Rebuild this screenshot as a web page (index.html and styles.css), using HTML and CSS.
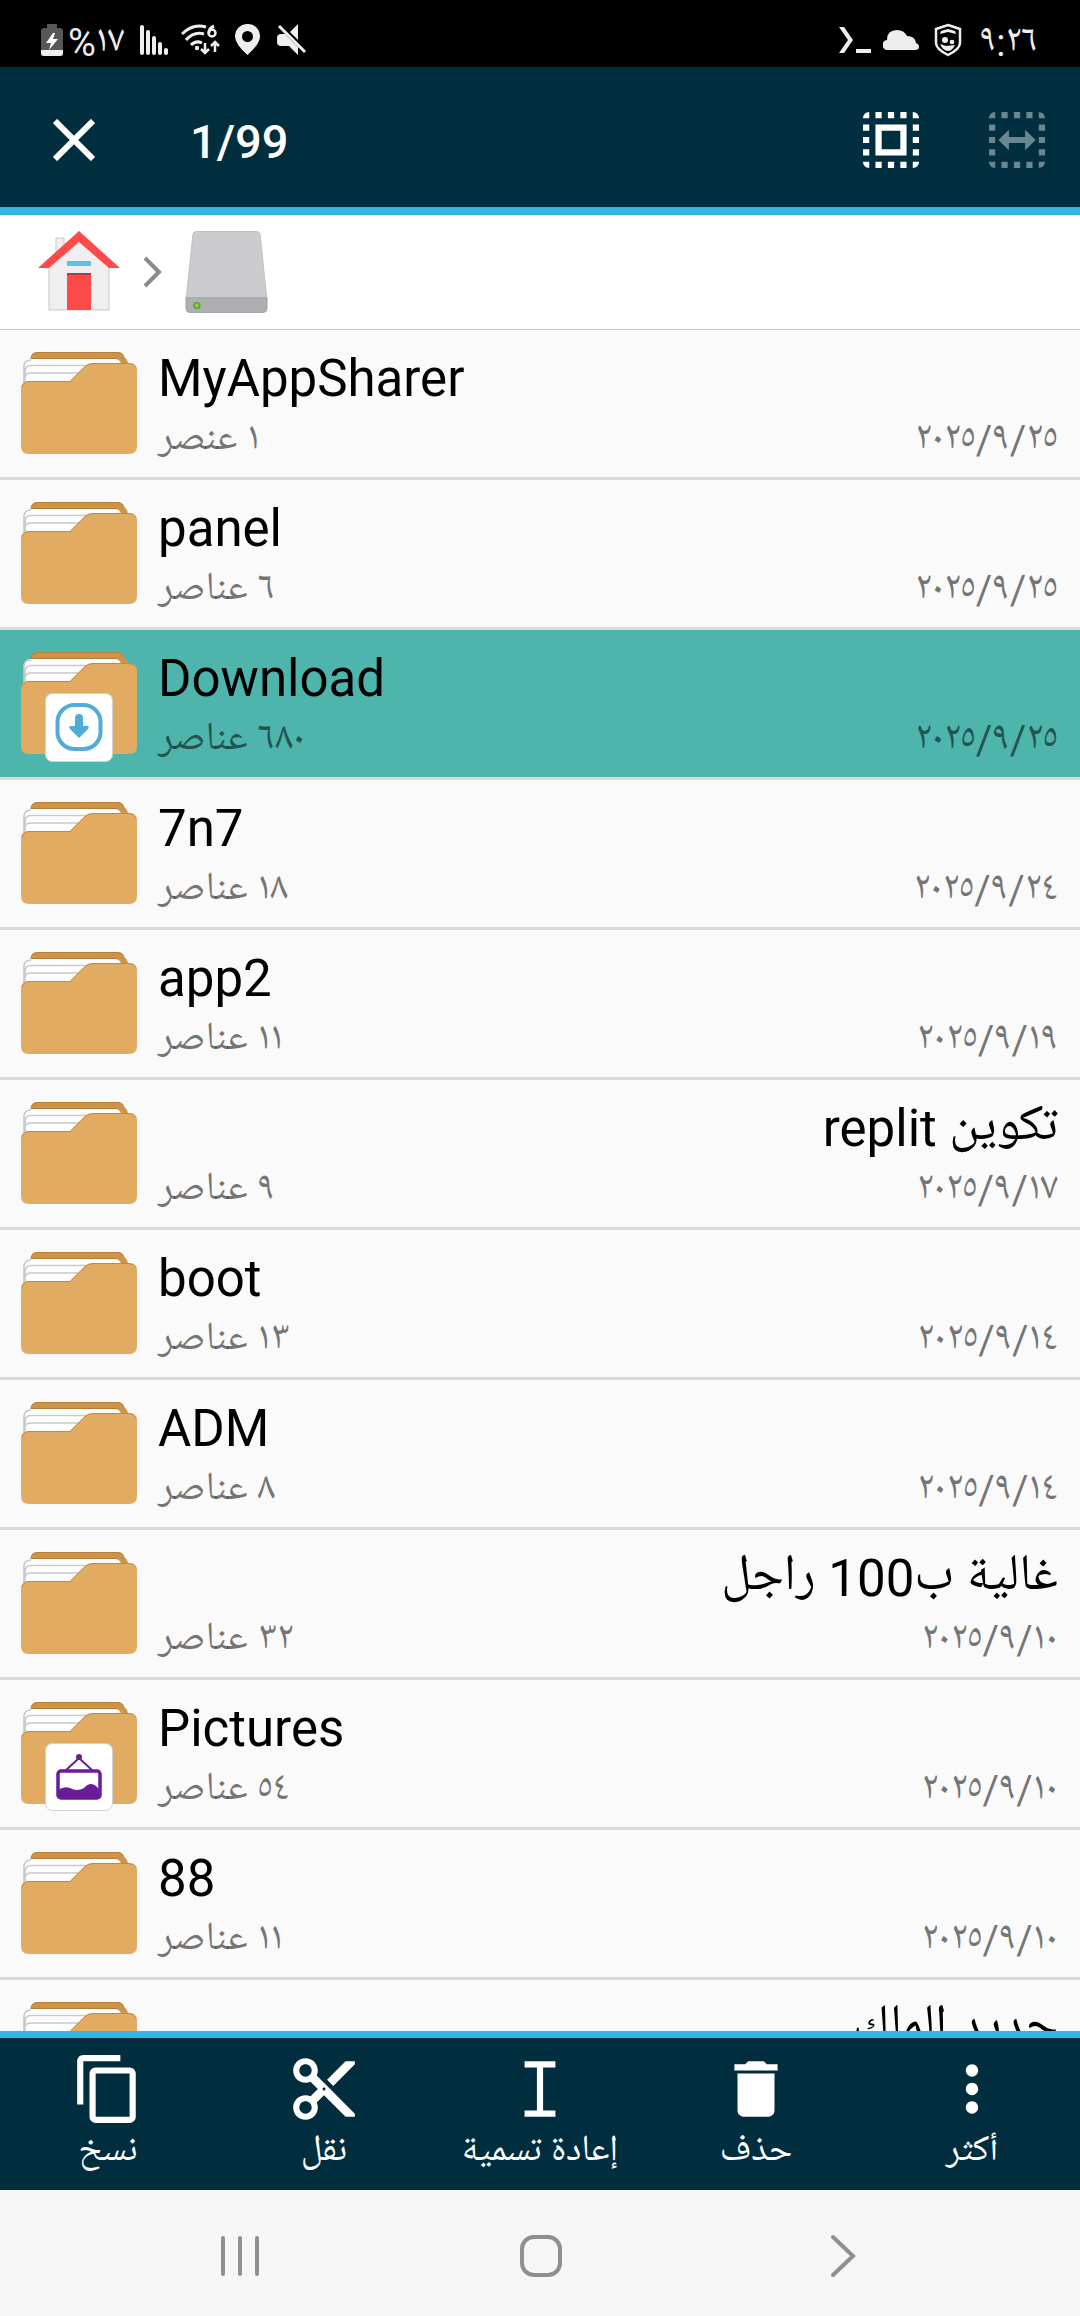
FILE: index.html
```html
<!DOCTYPE html>
<html lang="ar">
<head>
<meta charset="utf-8">
<meta name="viewport" content="width=device-width, initial-scale=1">
<title>1/99</title>
<link rel="stylesheet" href="styles.css">
</head>
<body>
<svg class="symbols" aria-hidden="true">
  <symbol id="folder" viewBox="21 22 116 110">
    <path d="M31 40V29q0-7 7-7h79q7 0 7 7v20H31z" fill="#cf9345"/>
    <path d="M31 29q0-6.500 7-6.500h79q7 0 7 6.500" transform="translate(0 0)" fill="none" stroke="#b5803c"/>
    <path d="M122 26q6 2 6 9H116z" fill="#cf9345"/>
    <path d="M31 28h86v3H31z" fill="#b27c38"/>
    <path d="M24 60V36q0-7 7-7h84q6 0 7 8v12L60 60z" fill="#fff"/>
    <path d="M24 54V37q0-7 7-7M25 54V42q0-6.500 6-6.500h56M25 56v-8q0-5 6-5h48" fill="none" stroke="#c9c9cb" stroke-width="1.600"/>
    <path d="M21 59q0-8 8-8h41l14-14q4-4 9-4h36q8 0 8 8v75q0 8-8 8H29q-8 0-8-8z" fill="#e1ac62"/>
    <path d="M22 57q2-5.500 7-5.500h41l14-14q4-4 9-4h36q5 0 7 4" fill="none" stroke="#c08a45"/>
  </symbol>
  <symbol id="dots-frame" viewBox="3 3 18 18">
    <path d="M3 5h2V3c-1.100 0-2 .9-2 2zm0 8h2v-2H3v2zm4 8h2v-2H7v2zM3 9h2V7H3v2zm10-6h-2v2h2V3zm6 0v2h2c0-1.100-.9-2-2-2zM5 21v-2H3c0 1.100.9 2 2 2zm-2-4h2v-2H3v2zM9 3H7v2h2V3zm2 18h2v-2h-2v2zm8-8h2v-2h-2v2zm0 8c1.100 0 2-.9 2-2h-2v2zm0-12h2V7h-2v2zm0 8h2v-2h-2v2zm-4 4h2v-2h-2v2zm0-16h2V3h-2v2z"/>
  </symbol>
</svg>

<div class="status">
  <div class="status-group">
    <svg width="22" height="34" viewBox="0 0 22 34"><path d="M6 1h10v4h3q3 0 3 3v22q0 3-3 3H3q-3 0-3-3V8q0-3 3-3h3z" fill="#575757"/><path d="M0 27h22v3q0 3-3 3H3q-3 0-3-3z" fill="#eee"/><path d="M12 10 5 20h5l-2 7 9-11h-5l2-6z" fill="#fff"/></svg>
    <span class="status-text battery-text">%١٧</span>
    <svg class="gap-signal" width="28" height="30" viewBox="0 0 28 30" stroke="#eee" stroke-width="4" stroke-linecap="round"><path d="M2 2v26M8 7v21M14 13v15M20 19v9M26 25v3"/></svg>
    <svg class="gap-wifi" width="40" height="32" viewBox="0 0 40 32" fill="none" stroke="#eee" stroke-width="3"><path d="M1 10Q12-1 25 3M5 16q8-9 18-6M10 21q5-5 11-2"/><circle cx="16" cy="24" r="2.200" fill="#eee" stroke="none"/><path d="M33 2q-5 2-5 7"/><circle cx="31" cy="9" r="3.500" stroke-width="2.500"/><path d="M24 19v10m-4-4 4 4 4-4M34 28V18m-4 4 4-4 4 4" stroke-width="2.500"/></svg>
    <svg class="gap-pin" width="25" height="31" viewBox="0 0 25 31"><path d="M12.500 0A12 12 0 0 0 0 12.500Q0 20 12.500 31 25 20 25 12.500A12 12 0 0 0 12.500 0zm0 7a5.500 5.500 0 1 1 0 11 5.500 5.500 0 0 1 0-11z" fill="#eee"/></svg>
    <svg class="gap-mute" width="30" height="31" viewBox="0 0 30 31"><path d="M4 10h4l13 13v8l-9-9H4q-4 0-4-4v-4q0-4 4-4zM13 8l8-8v16z" fill="#eee"/><path d="m2 2 26 26" stroke="#eee" stroke-width="3"/></svg>
  </div>
  <div class="status-group">
    <svg width="34" height="28" viewBox="0 0 34 28"><path d="M1 1h5l9 13-9 13H1l9-13z" fill="#eee"/><path d="M18 23h15v4H18z" fill="#eee"/></svg>
    <svg class="gap-small cloud" width="36" height="20" viewBox="0 0 36 20"><path d="M5 20a5 5 0 0 1-1-10Q4 0 14 0q7 0 10 6 8 0 9 7 3 1 3 4t-4 3z" fill="#eee"/></svg>
    <svg class="gap-shield" width="28" height="34" viewBox="0 0 28 34"><path d="m14 2 12 4v14q0 6-12 12Q2 26 2 20V6z" fill="none" stroke="#eee" stroke-width="2.500"/><path d="m6 11 1-3 7-2 7 2 1 3-8-2z" fill="#eee"/><circle cx="11" cy="17" r="3" fill="#eee"/><circle cx="18" cy="19" r="2.300" fill="#eee"/><path d="m6 21 6 2 9-1q-3 6-7 6-5 0-8-7z" fill="#eee"/></svg>
    <span class="status-text clock">٩:٢٦</span>
  </div>
</div>

<header class="toolbar">
  <button class="icon-button" aria-label="إغلاق"><svg width="42" height="42" viewBox="0 0 42 42"><path d="m2 2 38 38M40 2 2 40" stroke="#fff" stroke-width="6"/></svg></button>
  <h1 class="selection-count">1/99</h1>
  <div class="toolbar-actions">
    <button class="icon-button" aria-label="تحديد الكل"><svg width="56" height="56" viewBox="3 3 18 18" fill="#fff"><use href="#dots-frame" x="3" y="3" width="18" height="18"/><path d="M7 17h10V7H7v10zm2-8h6v6H9V9z"/></svg></button>
    <button class="icon-button" aria-label="تحديد نطاق" disabled><svg width="56" height="56" viewBox="3 3 18 18" fill="#698790"><use href="#dots-frame" x="3" y="3" width="18" height="18"/><path d="M6 12l3.400-3.300V11h5.200V8.700L18 12l-3.400 3.300V13H9.400v2.300z"/></svg></button>
  </div>
</header>

<nav class="crumbs" aria-label="المسار">
  <a href="#" aria-label="الرئيسية"><svg width="82" height="82" viewBox="0 0 82 82"><path d="M18 7h8v24h-8z" fill="#efefef" stroke="#c5caca"/><path d="M11 36 41 10l30 26v43H11z" fill="#efefef" stroke="#c5caca"/><path d="M41 0 82 37H71L41 11 11 37H0z" fill="#ff4a4a"/><path d="M29 30h24v5H29z" fill="#5fbfe6"/><path d="M29 43h24v36H29z" fill="#ff4a4a"/><path d="M29 42h24v2H29z" fill="#b83a3a"/></svg></a>
  <svg width="19" height="32" viewBox="0 0 19 32"><path d="m2 2 14 14L2 30" fill="none" stroke="#8a8a8a" stroke-width="4"/></svg>
  <a href="#" aria-label="التخزين"><svg width="83" height="84" viewBox="0 0 84 84"><path d="M8 4q0-3 4-3h60q4 0 4 3l7 67H1z" fill="#cccccf" stroke="#bfbfc1"/><path d="M1 68h82v11q0 4-4 4H5q-4 0-4-4z" fill="#aeafb2" stroke="#a3a4a6"/><circle cx="12" cy="76" r="3" fill="#93c83d" stroke="#5c9a3a" stroke-width="1.500"/></svg></a>
</nav>

<main class="files">
  <ul class="file-list">
    <li><a class="file" href="#"><svg class="folder"><use href="#folder"/></svg><span class="info"><span class="name" dir="auto">MyAppSharer</span><span class="meta"><span dir="rtl">١ عنصر</span><span>٢٠٢٥/٩/٢٥</span></span></span></a></li>
    <li><a class="file" href="#"><svg class="folder"><use href="#folder"/></svg><span class="info"><span class="name" dir="auto">panel</span><span class="meta"><span dir="rtl">٦ عناصر</span><span>٢٠٢٥/٩/٢٥</span></span></span></a></li>
    <li><a class="file selected" href="#" aria-current="true"><svg class="folder" viewBox="21 22 116 110"><use href="#folder" x="21" y="22" width="116" height="110"/><rect x="45.500" y="63.500" width="67" height="68" rx="7" fill="#fff" stroke="#d0d3d3"/><rect x="57.500" y="75" width="43" height="44" rx="17" fill="none" stroke="#53acd5" stroke-width="4"/><path d="M75 88q0-4 4-4t4 4v8h4q3 0 1 3l-9 9-9-9q-2-3 1-3h4z" fill="#4badd8"/></svg><span class="info"><span class="name" dir="auto">Download</span><span class="meta"><span dir="rtl">٦٨٠ عناصر</span><span>٢٠٢٥/٩/٢٥</span></span></span></a></li>
    <li><a class="file" href="#"><svg class="folder"><use href="#folder"/></svg><span class="info"><span class="name" dir="auto">7n7</span><span class="meta"><span dir="rtl">١٨ عناصر</span><span>٢٠٢٥/٩/٢٤</span></span></span></a></li>
    <li><a class="file" href="#"><svg class="folder"><use href="#folder"/></svg><span class="info"><span class="name" dir="auto">app2</span><span class="meta"><span dir="rtl">١١ عناصر</span><span>٢٠٢٥/٩/١٩</span></span></span></a></li>
    <li><a class="file" href="#"><svg class="folder"><use href="#folder"/></svg><span class="info"><span class="name" dir="auto">تكوين replit</span><span class="meta"><span dir="rtl">٩ عناصر</span><span>٢٠٢٥/٩/١٧</span></span></span></a></li>
    <li><a class="file" href="#"><svg class="folder"><use href="#folder"/></svg><span class="info"><span class="name" dir="auto">boot</span><span class="meta"><span dir="rtl">١٣ عناصر</span><span>٢٠٢٥/٩/١٤</span></span></span></a></li>
    <li><a class="file" href="#"><svg class="folder"><use href="#folder"/></svg><span class="info"><span class="name" dir="auto">ADM</span><span class="meta"><span dir="rtl">٨ عناصر</span><span>٢٠٢٥/٩/١٤</span></span></span></a></li>
    <li><a class="file" href="#"><svg class="folder"><use href="#folder"/></svg><span class="info"><span class="name" dir="auto">غالية ب100 راجل</span><span class="meta"><span dir="rtl">٣٢ عناصر</span><span>٢٠٢٥/٩/١٠</span></span></span></a></li>
    <li><a class="file" href="#"><svg class="folder" viewBox="21 22 116 110"><use href="#folder" x="21" y="22" width="116" height="110"/><rect x="45.500" y="63.500" width="67" height="67" rx="7" fill="#fff" stroke="#d0d3d3"/><path d="m65 91 14-13 14 13" fill="none" stroke="#6a1b9a" stroke-width="2"/><circle cx="79" cy="77" r="3" fill="#6a1b9a"/><rect x="58" y="91" width="42" height="27" rx="3" fill="none" stroke="#6a1b9a" stroke-width="3.500"/><path d="M58 110q6-4 12-2 7 4 14 0 6-7 12-2l4 4v8H58z" fill="#6a1b9a"/></svg><span class="info"><span class="name" dir="auto">Pictures</span><span class="meta"><span dir="rtl">٥٤ عناصر</span><span>٢٠٢٥/٩/١٠</span></span></span></a></li>
    <li><a class="file" href="#"><svg class="folder"><use href="#folder"/></svg><span class="info"><span class="name" dir="auto">88</span><span class="meta"><span dir="rtl">١١ عناصر</span><span>٢٠٢٥/٩/١٠</span></span></span></a></li>
    <li><a class="file" href="#"><svg class="folder"><use href="#folder"/></svg><span class="info"><span class="name" dir="auto">جديد الملك</span></span></a></li>
  </ul>
</main>

<footer class="actions">
  <button class="action"><svg viewBox="0 0 24 24"><path d="M16 1H4c-1.100 0-2 .9-2 2v14h2V3h12V1zm3 4H8c-1.100 0-2 .9-2 2v14c0 1.100.9 2 2 2h11c1.100 0 2-.9 2-2V7c0-1.100-.9-2-2-2zm0 16H8V7h11v14z"/></svg><span>نسخ</span></button>
  <button class="action"><svg viewBox="0 0 24 24"><path d="M9.640 7.640c.23-.5.360-1.050.360-1.640 0-2.210-1.790-4-4-4S2 3.790 2 6s1.790 4 4 4c.59 0 1.140-.13 1.640-.36L10 12l-2.360 2.360C7.140 14.130 6.590 14 6 14c-2.210 0-4 1.790-4 4s1.790 4 4 4 4-1.790 4-4c0-.59-.13-1.140-.36-1.640L12 14l7 7h3v-1L9.640 7.640zM6 8c-1.100 0-2-.89-2-2s.9-2 2-2 2 .89 2 2-.9 2-2 2zm0 12c-1.100 0-2-.89-2-2s.9-2 2-2 2 .89 2 2-.9 2-2 2zm6-7.500c-.28 0-.5-.22-.5-.5s.22-.5.5-.5.5.22.5.5-.22.5-.5.5zM19 3l-6 6 2 2 7-7V3z"/></svg><span>نقل</span></button>
  <button class="action"><svg viewBox="0 0 24 24"><path d="M7 3h10v2h-4v14h4v2H7v-2h4V5H7z"/></svg><span>إعادة تسمية</span></button>
  <button class="action"><svg viewBox="0 0 24 24"><path d="M6 19c0 1.100.9 2 2 2h8c1.100 0 2-.9 2-2V7H6v12zM19 4h-3.500l-1-1h-5l-1 1H5v2h14V4z"/></svg><span>حذف</span></button>
  <button class="action"><svg viewBox="0 0 24 24"><path d="M12 8c1.100 0 2-.9 2-2s-.9-2-2-2-2 .9-2 2 .9 2 2 2zm0 2c-1.100 0-2 .9-2 2s.9 2 2 2 2-.9 2-2-.9-2-2-2zm0 6c-1.100 0-2 .9-2 2s.9 2 2 2 2-.9 2-2-.9-2-2-2z"/></svg><span>أكثر</span></button>
</footer>

<div class="system-nav">
  <button aria-label="التطبيقات الأخيرة"><svg width="38" height="42" viewBox="0 0 38 42"><path d="M2 3v36M19 3v36M36 3v36"/></svg></button>
  <button aria-label="الشاشة الرئيسية"><svg width="42" height="42" viewBox="0 0 42 42"><rect x="2" y="2" width="38" height="38" rx="12"/></svg></button>
  <button aria-label="رجوع"><svg width="26" height="44" viewBox="0 0 26 44"><path d="m3 3 20 19L3 41"/></svg></button>
</div>
</body>
</html>
```
FILE: styles.css
```css
* { box-sizing: border-box; }

body {
  margin: 0;
  height: 100vh;
  display: flex;
  flex-direction: column;
  background: #fafafa;
  color: #000;
  font-family: Roboto, "Noto Naskh Arabic UI", "Noto Naskh Arabic", "Noto Sans Arabic", "DejaVu Sans", sans-serif;
}

svg { display: block; flex: none; }
ul { list-style: none; margin: 0; padding: 0; }
a { color: inherit; text-decoration: none; }
button {
  border: 0;
  padding: 0;
  background: none;
  color: inherit;
  font: inherit;
}
.symbols { position: absolute; width: 0; height: 0; }

.status {
  flex: none;
  display: flex;
  justify-content: space-between;
  align-items: center;
  height: 67px;
  padding: 12px 42px 0 41px;
  background: #000;
  color: #eee;
  font-size: 38px;
  line-height: 40px;
}
.status-group { display: flex; align-items: center; }
.status-text { padding-top: 6px; }
.battery-text { margin-left: 5px; }
.gap-signal { margin-left: 16px; }
.gap-wifi { margin-left: 13px; }
.gap-pin { margin-left: 14px; }
.gap-mute { margin-left: 17px; }
.gap-small { margin-left: 11px; }
.gap-shield { margin-left: 15px; }
.clock { margin-left: 18px; }

.toolbar {
  flex: none;
  display: flex;
  align-items: center;
  height: 148px;
  padding: 6px 35px 0 53px;
  border-bottom: 8px solid #33b5e5;
  background: #002e3e;
  color: #fff;
}
.toolbar-actions { display: flex; gap: 70px; margin-left: auto; }
.selection-count {
  margin: 4px 0 0 95px;
  font-size: 47px;
  line-height: 56px;
  font-weight: 500;
}

.crumbs {
  flex: none;
  display: flex;
  align-items: center;
  gap: 23px;
  height: 115px;
  padding: 0 38px;
  border-bottom: 1px solid #c9c9c9;
  background: #fff;
}

.files { flex: 1; min-height: 0; overflow: hidden; }
.file {
  display: flex;
  gap: 21px;
  height: 150px;
  padding: 22px 22px 0 21px;
  border-bottom: 3px solid #dadada;
}
.selected { background: #4db5ac; }
.folder { width: 116px; height: 110px; }
.info { flex: 1; min-width: 0; display: flex; flex-direction: column; }
.name {
  height: 68px;
  font-size: 51px;
  line-height: 54px;
  white-space: nowrap;
}
.meta {
  display: flex;
  justify-content: space-between;
  font-size: 40px;
  line-height: 42px;
  color: rgba(0, 0, 0, 0.54);
}

.actions {
  flex: none;
  display: grid;
  grid-template-columns: repeat(5, 1fr);
  height: 159px;
  border-top: 7px solid #33b5e5;
  background: #002e3e;
  color: #fff;
}
.action {
  display: flex;
  flex-direction: column;
  align-items: center;
  padding-top: 14px;
  font-size: 37px;
  line-height: 54px;
}
.action svg { width: 74px; height: 74px; fill: #fff; }

.system-nav {
  flex: none;
  display: grid;
  grid-template-columns: repeat(3, 1fr);
  place-items: center;
  height: 126px;
  padding: 6px 86px 0 89px;
  background: #f6f6f6;
}
.system-nav svg {
  fill: none;
  stroke: #8f8f8f;
  stroke-width: 4;
  stroke-linecap: round;
}
```
